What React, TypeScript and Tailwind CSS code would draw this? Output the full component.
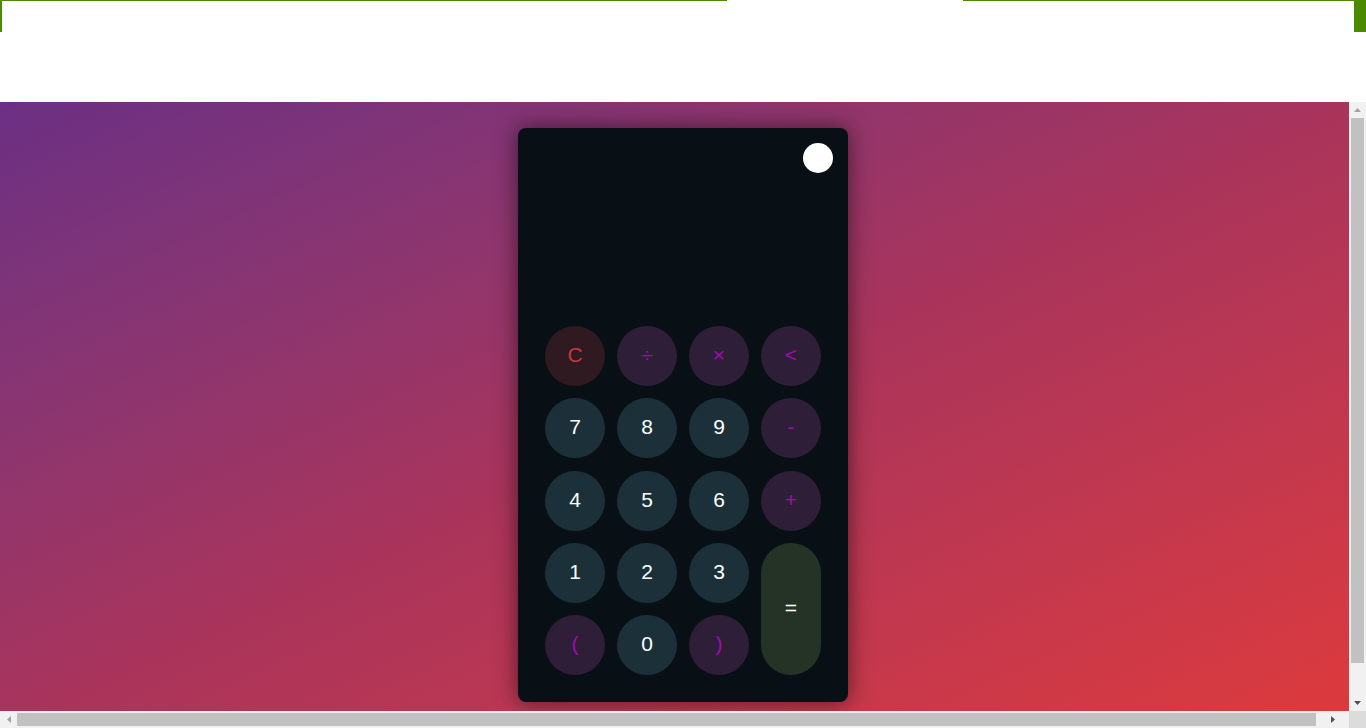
import React from "react"

type Key = { label: string; kind: "num" | "op" | "clear" | "eq" }

const keys: Key[] = [
  { label: "C", kind: "clear" },
  { label: "÷", kind: "op" },
  { label: "×", kind: "op" },
  { label: "<", kind: "op" },
  { label: "7", kind: "num" },
  { label: "8", kind: "num" },
  { label: "9", kind: "num" },
  { label: "-", kind: "op" },
  { label: "4", kind: "num" },
  { label: "5", kind: "num" },
  { label: "6", kind: "num" },
  { label: "+", kind: "op" },
  { label: "1", kind: "num" },
  { label: "2", kind: "num" },
  { label: "3", kind: "num" },
  { label: "=", kind: "eq" },
  { label: "(", kind: "op" },
  { label: "0", kind: "num" },
  { label: ")", kind: "op" },
]

const styles: Record<Key["kind"], string> = {
  num: "bg-[#1b3039] text-white rounded-full",
  op: "bg-[#2e1e38] text-[#a00cb0] rounded-full",
  clear: "bg-[#2e1a20] text-[#d0343c] rounded-full",
  eq: "bg-[#243325] text-white rounded-[30px] row-span-2",
}

function CalcKey({ k }: { k: Key }) {
  return (
    <button className={`flex items-center justify-center pb-[3px] text-[21px] leading-none ${styles[k.kind]}`}>
      {k.label}
    </button>
  )
}

// tiny triangle used in the fake scrollbar buttons
function Arrow({ dir, dark }: { dir: "up" | "down" | "left" | "right"; dark?: boolean }) {
  const fill = dark ? "#505050" : "#a3a3a3"
  const pts = {
    up: "0,4 7,4 3.5,0",
    down: "0,0 7,0 3.5,4",
    left: "4,0 4,7 0,3.5",
    right: "0,0 0,7 4,3.5",
  }[dir]
  const vertical = dir === "up" || dir === "down"
  return (
    <svg width={vertical ? 7 : 4} height={vertical ? 4 : 7} viewBox={vertical ? "0 0 7 4" : "0 0 4 7"}>
      <polygon points={pts} fill={fill} />
    </svg>
  )
}

export default function App() {
  return (
    <div className="h-[728px] w-full flex flex-col overflow-hidden bg-white font-['Liberation_Sans',Arial,sans-serif]">
      {/* top frame */}
      <div className="h-[102px] shrink-0 relative">
        <div className="flex h-px">
          <div className="w-[727px] bg-[#4b8a00]" />
          <div className="w-[236px]" />
          <div className="flex-1 bg-[#4b8a00]" />
        </div>
        <div className="absolute left-0 top-0 w-[2px] h-[32px] bg-[#4b8a00]" />
        <div className="absolute right-0 top-0 w-[12px] h-[32px] bg-[#4b8a00]" />
      </div>

      {/* scrolling view */}
      <div className="flex-1 flex min-h-0">
        <div className="flex-1 overflow-hidden">
          <div className="w-[1366px] h-[626px] bg-linear-to-br from-[#6b2f83] via-[#a9345b] to-[#de3a3a] flex justify-center pt-[26px]">
            <div className="w-[330px] h-[574px] bg-[#081016] rounded-[8px] p-[15px] flex flex-col shadow-[0_0_22px_rgba(0,0,0,0.55)]">
              <div className="h-[171px] flex justify-end">
                <div className="w-[30px] h-[30px] rounded-full bg-white" />
              </div>
              <div className="p-[12px] grid grid-cols-[repeat(4,60px)] grid-rows-[repeat(5,60px)] gap-x-[12px] gap-y-[12.25px]">
                {keys.map((k) => (
                  <CalcKey key={k.label} k={k} />
                ))}
              </div>
            </div>
          </div>
        </div>
        {/* vertical scrollbar */}
        <div className="w-[17px] shrink-0 bg-[#f1f1f1] flex flex-col items-center">
          <div className="h-[16px] flex items-center justify-center">
            <Arrow dir="up" />
          </div>
          <div className="w-[13px] h-[545px] bg-[#c1c1c1]" />
          <div className="flex-1" />
          <div className="h-[17px] flex items-center justify-center">
            <Arrow dir="down" dark />
          </div>
        </div>
      </div>

      {/* horizontal scrollbar */}
      <div className="h-[17px] shrink-0 flex">
        <div className="flex-1 bg-[#f1f1f1] flex items-center">
          <div className="w-[17px] flex justify-center">
            <Arrow dir="left" />
          </div>
          <div className="w-[1299px] h-[13px] bg-[#c1c1c1]" />
          <div className="flex-1 flex justify-center">
            <Arrow dir="right" dark />
          </div>
        </div>
        <div className="w-[17px] bg-[#dcdcdc]" />
      </div>
    </div>
  )
}
